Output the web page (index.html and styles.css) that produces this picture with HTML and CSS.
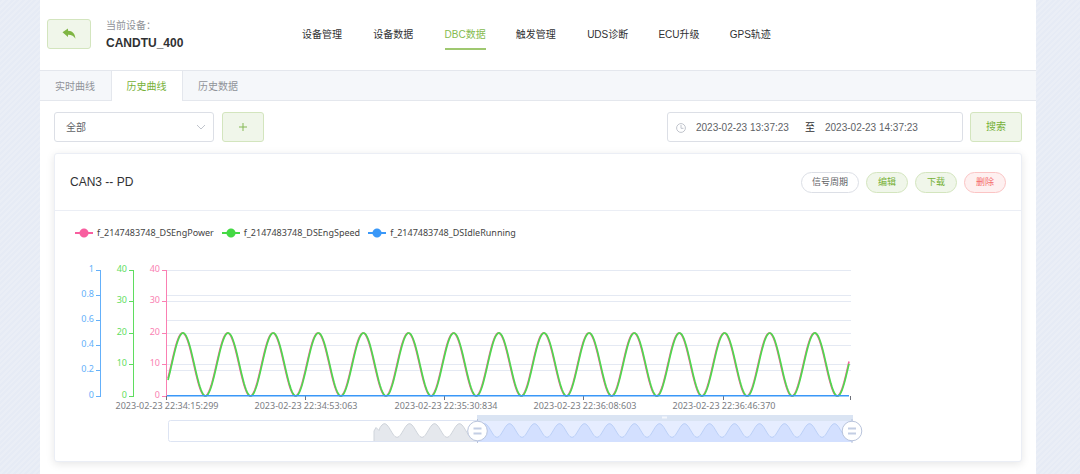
FILE: index.html
```html
<!DOCTYPE html>
<html lang="zh-CN">
<head>
<meta charset="utf-8">
<title>DBC数据 - 历史曲线</title>
<link rel="stylesheet" href="styles.css">
</head>
<body>
<div class="page">
  <header class="topbar">
    <button class="btn back" type="button" aria-label="返回">
      <svg width="14" height="12" viewBox="0 0 14 12" aria-hidden="true"><path d="M0.5 4.3 6 .4V2.7C10.5 2.8 13.2 5.600 13.400 10.800 11.800 7.800 9.500 6.600 6 6.700V9.100Z" fill="#7fb543"/></svg>
    </button>
    <div class="device">
      <span class="device-label">当前设备：</span>
      <strong class="device-name">CANDTU_400</strong>
    </div>
    <nav class="nav">
      <a href="#">设备管理</a>
      <a href="#">设备数据</a>
      <a href="#" class="current">DBC数据</a>
      <a href="#">触发管理</a>
      <a href="#">UDS诊断</a>
      <a href="#">ECU升级</a>
      <a href="#">GPS轨迹</a>
    </nav>
  </header>

  <div class="tabs" role="tablist">
    <button class="tab" type="button" role="tab">实时曲线</button>
    <button class="tab selected" type="button" role="tab" aria-selected="true">历史曲线</button>
    <button class="tab" type="button" role="tab">历史数据</button>
  </div>

  <main class="content">
    <form class="toolbar">
      <label class="select-box">
        <select aria-label="分组"><option>全部</option></select>
        <svg width="10" height="10" viewBox="0 0 10 10" aria-hidden="true"><path d="M1 3l4 4 4-4" fill="none" stroke="#c0c4cc"/></svg>
      </label>
      <button class="btn add" type="button" aria-label="添加">
        <svg width="10" height="10" viewBox="0 0 10 10" aria-hidden="true"><path d="M5 1v8M1 5h8" fill="none" stroke="#85b855"/></svg>
      </button>
      <div class="range">
        <svg width="10" height="10" viewBox="0 0 10 10" aria-hidden="true"><circle cx="5" cy="5" r="4.400" fill="none" stroke="#c0c4cc"/><path d="M5 2v3.300h2.500" fill="none" stroke="#c0c4cc"/></svg>
        <input type="text" aria-label="开始时间" value="2023-02-23 13:37:23">
        <span>至</span>
        <input type="text" aria-label="结束时间" value="2023-02-23 14:37:23">
      </div>
      <button class="btn search" type="button">搜索</button>
    </form>

    <section class="card">
      <div class="card-head">
        <h2>CAN3 -- PD</h2>
        <button class="pill plain" type="button">信号周期</button>
        <button class="pill" type="button">编辑</button>
        <button class="pill" type="button">下载</button>
        <button class="pill danger" type="button">删除</button>
      </div>
      <ul class="legend">
        <li class="pink">f_2147483748_DSEngPower</li>
        <li class="green">f_2147483748_DSEngSpeed</li>
        <li class="blue">f_2147483748_DSIdleRunning</li>
      </ul>
      <svg class="chart" id="chart" viewBox="0 0 966 211" role="img" aria-label="历史曲线图"></svg>
    </section>
  </main>
</div>
<script src="chart.js"></script>
</body>
</html>
```
FILE: styles.css
```css
* { box-sizing: border-box; }

body {
  margin: 0;
  background: repeating-linear-gradient(135deg, #e6ebf5 0 2px, #eaeef6 2px 4px);
  font: 10px/14px "Liberation Sans", "Noto Sans CJK SC", sans-serif;
  color: #303133;
}

button, input, select { font: inherit; color: inherit; margin: 0; }
button { cursor: pointer; }

.page {
  min-height: 100vh;
  margin: 0 44px 0 40px;
  background: #fff;
}

.topbar {
  display: flex;
  align-items: center;
  height: 70px;
  padding: 0 7px 2px;
}

.btn {
  display: flex;
  align-items: center;
  justify-content: center;
  height: 30px;
  padding: 0;
  border: 1px solid #d3e5be;
  border-radius: 3px;
  background: #f0f6ea;
  color: #76b037;
}

.back { width: 44px; }

.device {
  display: flex;
  flex-direction: column;
  gap: 4px;
  width: 196px;
  margin-left: 15px;
}

.device-label {
  font-family: "Noto Sans CJK TC", sans-serif;
  color: #909399;
}
.device-name { font-size: 12px; }

.nav {
  display: grid;
  grid-template-columns: repeat(7, 1fr);
  justify-items: start;
  width: 499px;
  padding-top: 9px;
}

.nav a {
  padding-bottom: 6px;
  border-bottom: 2px solid transparent;
  color: inherit;
  text-decoration: none;
}

.nav .current {
  border-color: #9fc870;
  color: #85bb4f;
}

.tabs {
  display: flex;
  height: 31px;
  border: solid #e4e7ed;
  border-width: 1px 0;
  background: #f5f7fa;
}

.tab {
  width: 71px;
  height: 30px;
  padding: 2px 1px 0 0;
  border: 0;
  background: none;
  color: #909399;
}

.tab.selected {
  width: 72px;
  border: solid #e4e7ed;
  border-width: 0 1px;
  background: #fff;
  color: #76b037;
}

.content { padding: 11px 14px; }

.toolbar {
  display: flex;
  gap: 8px;
}

.select-box, .range {
  display: flex;
  align-items: center;
  height: 30px;
  border: 1px solid #dcdfe6;
  border-radius: 3px;
  background: #fff;
  color: #606266;
}

.select-box {
  width: 160px;
  padding-right: 7px;
}

.select-box select {
  flex: 1;
  height: 28px;
  padding: 1px 11px 0;
  border: 0;
  background: none;
  appearance: none;
}

.add { width: 42px; }

.range {
  width: 296px;
  margin-left: auto;
  padding: 1px 8px 0;
  gap: 10px;
}

.range input {
  width: 99px;
  padding: 0;
  border: 0;
  background: none;
}

.range span { color: #303133; }
.search { width: 52px; }
.toolbar .search { margin-left: -1px; }

.card {
  margin-top: 11px;
  border: 1px solid #ebeef5;
  border-radius: 3px;
  box-shadow: 0 2px 9px rgba(0, 0, 0, 0.1);
  background: #fff;
}

.card-head {
  display: flex;
  align-items: center;
  gap: 7px;
  height: 57px;
  padding: 0 15px;
  border-bottom: 1px solid #ebeef5;
}

.card-head h2 {
  margin: 0 auto 0 0;
  font-size: 12px;
  font-weight: 400;
}

.pill {
  height: 21px;
  padding: 0 11px;
  border: 1px solid #d3e5be;
  border-radius: 11px;
  background: #f0f6ea;
  color: #76b037;
  font-size: 9px;
  line-height: 13px;
}

.pill.plain {
  padding: 0 10px;
  border-color: #dcdfe6;
  background: #fff;
  color: #606266;
}

.pill.danger {
  border-color: #fbc4c4;
  background: #fef0f0;
  color: #f56c6c;
}

.legend {
  display: flex;
  gap: 8px;
  margin: 0;
  padding: 15px 20px 10px;
  list-style: none;
  font: 9px/14px "Noto Sans", sans-serif;
  color: #444;
}

.legend li {
  display: flex;
  align-items: center;
  gap: 4px;
}

.legend li::before {
  content: "";
  width: 18px;
  height: 10px;
  background:
    radial-gradient(circle at center, currentColor 4px, transparent 5px),
    linear-gradient(currentColor, currentColor) center / 100% 2px no-repeat;
}

.legend .pink::before { color: #f85e9f; }
.legend .green::before { color: #44d944; }
.legend .blue::before { color: #3a98f8; }

.chart {
  display: block;
  width: 100%;
  height: auto;
}

.chart text {
  font: 9px "Noto Sans", sans-serif;
}

.axis-label { text-anchor: end; }
.time-label { text-anchor: middle; fill: #7b7d83; }
```
FILE: chart.js
```js
const svg = document.getElementById('chart');
const plot = { left: 112, right: 796, top: 20, bottom: 146 };

function add(tag, attrs, text) {
  const el = document.createElementNS('http://www.w3.org/2000/svg', tag);
  for (const key in attrs) el.setAttribute(key, attrs[key]);
  if (text !== undefined) el.textContent = text;
  svg.appendChild(el);
}

function line(d, stroke, width = 1) {
  add('path', { d, stroke, 'stroke-width': width, fill: 'none' });
}

function wave(from, to, peak, period, middle, amplitude) {
  const points = [];
  for (let x = from; x <= to; x++) {
    const y = middle - amplitude * Math.cos((x - peak) * 2 * Math.PI / period);
    points.push(x + ' ' + y.toFixed(2));
  }
  return 'M' + points.join('L');
}

const axes = [
  { x: 45, color: '#64b0fa', labels: ['1', '0.8', '0.6', '0.4', '0.2', '0'] },
  { x: 78, color: '#5fdd5f', labels: ['40', '30', '20', '10', '0'] },
  { x: 111, color: '#fa7fb2', labels: ['40', '30', '20', '10', '0'] }
];

for (const axis of axes) {
  const step = (plot.bottom - plot.top) / (axis.labels.length - 1);
  axis.labels.forEach((label, i) => {
    const y = Math.floor(plot.top + i * step);
    if (y < plot.bottom) line(`M${plot.left} ${y + 0.5}H${plot.right}`, '#e4e9f3');
    line(`M${axis.x - 4} ${y + 0.5}H${axis.x}`, axis.color);
    add('text', { class: 'axis-label', x: axis.x - 6, y: y + 2, fill: axis.color }, label);
  });
  line(`M${axis.x + 0.5} ${plot.top}V${plot.bottom + 1}`, axis.color);
}

[111.5, 250.5, 389.5, 528.5, 668.5, 795.5].forEach(x => {
  line(`M${x} 146V150`, '#6e7079');
});
['22:34:15:299', '22:34:53:063', '22:35:30:834', '22:36:08:603', '22:36:46:370'].forEach((time, i) => {
  add('text', { class: 'time-label', x: 112 + Math.round(i * 139.25), y: 159 }, '2023-02-23 ' + time);
});

/* signal curves */
line(wave(113, 794, 127.5, 45.14, 114.5, 31.5), '#f85e9f', 1.6);
line(wave(113, 794, 128, 45.14, 114.5, 31.5), '#4fd84f', 1.7);
line('M112 145.7H794', '#3a98f8', 1.6);

/* zoom slider */
add('rect', { x: 113.5, y: 170.5, width: 684, height: 21, rx: 2, fill: '#fff', stroke: '#dde4f3' });
const rest = 'M319 191V181L321 177.500L324 180.500' + wave(325, 422, 329.5, 25, 180.5, 6.8).replace('M', 'L');
add('path', { d: rest + 'V191Z', fill: '#e5e8ed' });
line(rest, '#cfd4db');
add('rect', { x: 422, y: 165, width: 376, height: 6, fill: '#dae4f3' });
add('rect', { x: 422, y: 171, width: 376, height: 21, fill: '#e6edff' });
const chosen = wave(422, 797, 329.5, 25, 180.5, 6.8);
add('path', { d: chosen + 'V192H422Z', fill: '#d3e0ff' });
line(chosen, '#bbd0f8');
line('M607 167.500H612', '#f4f7fc', 2);
for (const x of [422.5, 797]) {
  line(`M${x} 169V193`, '#b9c4dc');
  add('circle', { cx: x, cy: 181, r: 9.8, fill: '#fff', stroke: '#b9c4dc' });
  line(`M${x - 4} 178.500H${x + 4}M${x - 4} 183.500H${x + 4}`, '#c3cee4', 2);
}
```
